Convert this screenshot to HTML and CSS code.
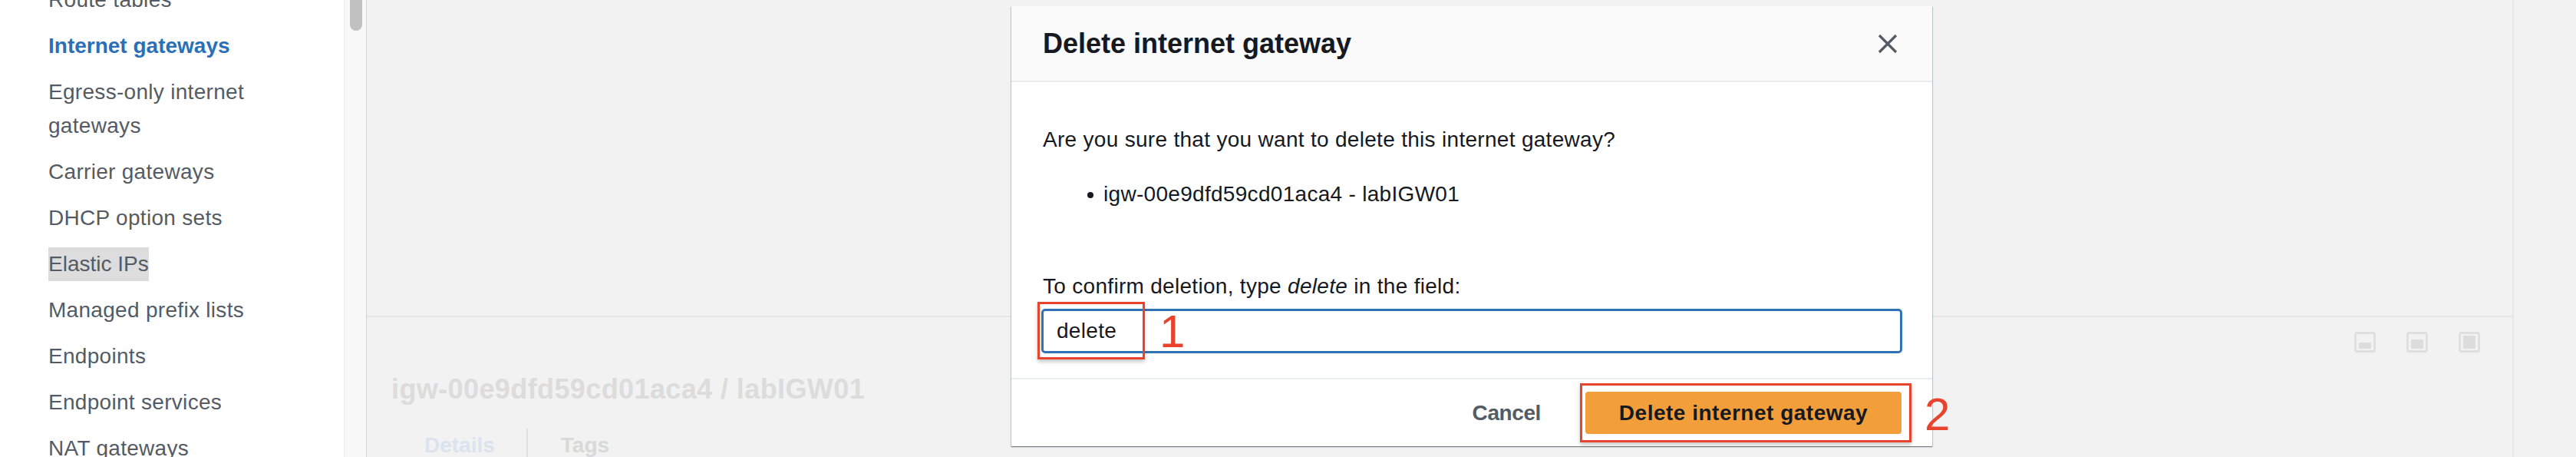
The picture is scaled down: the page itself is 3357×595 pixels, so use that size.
FILE: index.html
```html
<!DOCTYPE html>
<html lang="en">
<head>
<meta charset="utf-8">
<title>Delete internet gateway</title>
<link rel="stylesheet" href="styles.css">
</head>
<body>
<div class="app">
  <nav class="sidebar">
    <ul class="nav-list">
      <li class="nav-item">Route tables</li>
      <li class="nav-item active">Internet gateways</li>
      <li class="nav-item">Egress-only internet gateways</li>
      <li class="nav-item">Carrier gateways</li>
      <li class="nav-item">DHCP option sets</li>
      <li class="nav-item"><span class="hl">Elastic IPs</span></li>
      <li class="nav-item">Managed prefix lists</li>
      <li class="nav-item">Endpoints</li>
      <li class="nav-item">Endpoint services</li>
      <li class="nav-item">NAT gateways</li>
    </ul>
  </nav>
  <div class="scrolltrack"><div class="thumb"></div></div>
  <main class="main">
    <div class="content">
      <div class="upper"></div>
      <section class="details">
        <div class="toolbar">
          <svg viewBox="0 0 28 27"><rect x="1.5" y="1.5" width="25" height="24" rx="2" fill="none" stroke="#dfdfdf" stroke-width="3"/><rect x="6" y="14" width="16" height="8" rx="1" fill="#dcdcdc"/></svg>
          <svg viewBox="0 0 28 27"><rect x="1.5" y="1.5" width="25" height="24" rx="2" fill="none" stroke="#dfdfdf" stroke-width="3"/><rect x="6" y="10" width="16" height="12" rx="1" fill="#dcdcdc"/></svg>
          <svg viewBox="0 0 28 27"><rect x="1.5" y="1.5" width="25" height="24" rx="2" fill="none" stroke="#dfdfdf" stroke-width="3"/><rect x="6" y="5" width="16" height="17" rx="1" fill="#dcdcdc"/></svg>
        </div>
        <h2 class="detail-title">igw-00e9dfd59cd01aca4 / labIGW01</h2>
        <div class="tabs">
          <span class="tab active">Details</span>
          <span class="tab-sep"></span>
          <span class="tab">Tags</span>
        </div>
      </section>
    </div>
  </main>
</div>

<div class="modal" role="dialog">
  <header class="modal-header">
    <h1 class="modal-title">Delete internet gateway</h1>
    <svg class="close" viewBox="0 0 26 26"><path d="M2 2 L24 24 M24 2 L2 24" stroke="#545b64" stroke-width="3.2" fill="none"/></svg>
  </header>
  <div class="modal-body">
    <p class="question">Are you sure that you want to delete this internet gateway?</p>
    <ul class="id-list">
      <li>igw-00e9dfd59cd01aca4 - labIGW01</li>
    </ul>
    <p class="confirm-label">To confirm deletion, type <em>delete</em> in the field:</p>
    <input class="confirm-input" type="text" value="delete">
  </div>
  <footer class="modal-footer">
    <button class="btn-cancel">Cancel</button>
    <button class="btn-primary">Delete internet gateway</button>
  </footer>
  <div class="mark-box mark-box-1"></div>
  <div class="mark-num mark-num-1">1</div>
  <div class="mark-box mark-box-2"></div>
  <div class="mark-num mark-num-2">2</div>
</div>
</body>
</html>
```
FILE: styles.css
```css
* { box-sizing: border-box; }
html, body { margin: 0; padding: 0; }
body {
  width: 3357px;
  height: 595px;
  overflow: hidden;
  position: relative;
  background: #f2f2f2;
  font-family: "Liberation Sans", Arial, sans-serif;
}
.app { display: flex; height: 595px; }

.sidebar {
  width: 448px;
  flex: none;
  background: #fff;
  padding: 0 45px 0 63px;
  overflow: hidden;
}
.nav-list { list-style: none; margin: -30px 0 0; padding: 0; }
.nav-item {
  padding: 8px 0;
  font-size: 28px;
  line-height: 44px;
  color: #545b64;
  letter-spacing: 0.3px;
}
.nav-item.active { color: #2a70b8; font-weight: 700; letter-spacing: 0; }
.hl { display: inline-block; background: #dddddd; letter-spacing: 0; }

.scrolltrack {
  width: 30px;
  flex: none;
  background: #f8f8f8;
  border-left: 1px solid #ececec;
  border-right: 1px solid #d2d2d2;
  padding-left: 7px;
}
.thumb { width: 16px; height: 40px; background: #c1c1c1; border-radius: 0 0 8px 8px; }

.main { flex: 1; display: flex; }
.content {
  width: 2798px;
  border-right: 2px solid #e8e8e8;
  display: flex;
  flex-direction: column;
}
.upper { height: 413px; border-bottom: 2px solid #e6e6e6; flex: none; }
.details { padding: 19px 42px 0 32px; }
.toolbar { display: flex; justify-content: flex-end; gap: 40px; height: 27px; }
.toolbar svg { width: 28px; height: 27px; display: block; }
.detail-title {
  margin: 26px 0 0;
  font-size: 36px;
  line-height: 44px;
  font-weight: 700;
  color: #dcdcdc;
  letter-spacing: 0.4px;
}
.tabs { display: flex; margin-top: 29px; height: 44px; }
.tab {
  font-size: 28px;
  line-height: 44px;
  font-weight: 700;
  color: #d9d9d9;
  padding: 0 41px 0 43px;
}
.tab.active { color: #dbe3ee; }
.tab-sep { width: 2px; height: 44px; background: #e0e0e0; }

.modal {
  position: absolute;
  left: 1318px;
  top: 8px;
  width: 1200px;
  background: #fff;
  display: flex;
  flex-direction: column;
  box-shadow: 0 1px 1px 0 rgba(0, 28, 36, 0.35), 1px 1px 1px 0 rgba(0, 28, 36, 0.15), -1px 1px 1px 0 rgba(0, 28, 36, 0.15);
}
.modal-header {
  height: 99px;
  background: #fafafa;
  border-bottom: 2px solid #eaeded;
  display: flex;
  align-items: center;
  justify-content: space-between;
  padding: 0 45px 0 41px;
}
.modal-title {
  margin: 0;
  font-size: 36px;
  line-height: 44px;
  font-weight: 700;
  color: #16191f;
}
.close { width: 26px; height: 26px; display: block; }

.modal-body { padding: 53px 39px 32px 41px; color: #16191f; }
.question, .confirm-label {
  margin: 0;
  font-size: 28px;
  line-height: 44px;
  letter-spacing: 0.3px;
}
.id-list { list-style: none; margin: 27px 0 0; padding: 0 0 0 79px; }
.id-list li {
  position: relative;
  font-size: 28px;
  line-height: 44px;
  letter-spacing: 0.3px;
}
.id-list li::before {
  content: "";
  position: absolute;
  left: -21px;
  top: 19px;
  width: 8px;
  height: 8px;
  border-radius: 50%;
  background: #16191f;
}
.confirm-label { margin-top: 76px; }
.confirm-input {
  display: block;
  margin: 7px 0 0 -2px;
  width: calc(100% + 2px);
  height: 58px;
  border: 3px solid #2f72b6;
  border-radius: 5px;
  padding: 0 17px;
  font-family: "Liberation Sans", Arial, sans-serif;
  font-size: 28px;
  letter-spacing: 0.3px;
  color: #16191f;
  background: #fff;
  outline: none;
}

.modal-footer {
  height: 89px;
  border-top: 2px solid #eaeded;
  display: flex;
  align-items: center;
  justify-content: flex-end;
  padding-right: 40px;
}
.btn-cancel {
  border: 0;
  background: none;
  padding: 0;
  margin-right: 58px;
  font-family: "Liberation Sans", Arial, sans-serif;
  font-size: 28px;
  line-height: 44px;
  font-weight: 700;
  color: #545b64;
  letter-spacing: -0.4px;
}
.btn-primary {
  width: 412px;
  height: 55px;
  border: 0;
  border-radius: 4px;
  background: #f29f3b;
  font-family: "Liberation Sans", Arial, sans-serif;
  font-size: 28px;
  font-weight: 700;
  color: #16191f;
  letter-spacing: 0.5px;
  padding: 0;
}

.mark-box {
  position: absolute;
  border: 3px solid #e8432c;
  box-shadow: 0 3px 5px rgba(0, 0, 0, 0.22);
}
.mark-box-1 { left: 34px; top: 385px; width: 140px; height: 75px; }
.mark-box-2 { left: 741px; top: 491px; width: 432px; height: 77px; }
.mark-num {
  position: absolute;
  font-family: "Liberation Sans", Arial, sans-serif;
  font-size: 60px;
  line-height: 60px;
  color: #e8432c;
}
.mark-num-1 { left: 193px; top: 394px; }
.mark-num-2 { left: 1190px; top: 502px; }
```
